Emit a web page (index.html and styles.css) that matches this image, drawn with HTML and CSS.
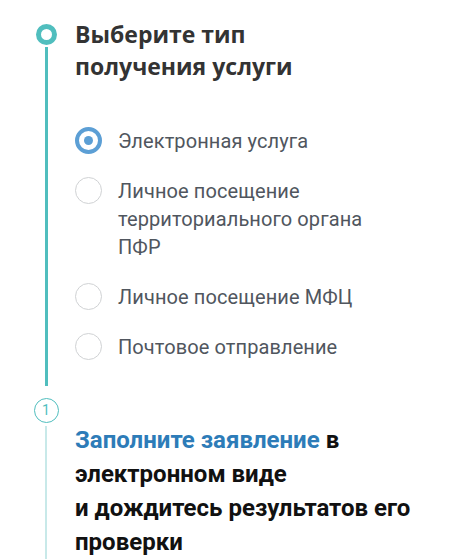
FILE: index.html
```html
<!DOCTYPE html>
<html lang="ru">
<head>
    <meta charset="UTF-8">
    <meta name="viewport" content="width=device-width, initial-scale=1.0">
    <title>Получение услуги</title>
    <link rel="stylesheet" href="styles.css">
</head>
<body>
    <div class="steps">
        <div class="step">
            <div class="rail">
                <div class="dot"></div>
                <div class="line"></div>
            </div>
            <div class="step-body first">
                <h2 class="title">Выберите тип<br>получения услуги</h2>
                <ul class="options">
                    <li class="option checked"><span class="radio"></span><span class="label">Электронная услуга</span></li>
                    <li class="option"><span class="radio"></span><span class="label">Личное посещение территориального органа ПФР</span></li>
                    <li class="option"><span class="radio"></span><span class="label">Личное посещение МФЦ</span></li>
                    <li class="option"><span class="radio"></span><span class="label">Почтовое отправление</span></li>
                </ul>
            </div>
        </div>
        <div class="step">
            <div class="rail">
                <div class="num">1</div>
                <div class="line light"></div>
            </div>
            <div class="step-body second">
                <p class="task"><a href="#" class="link">Заполните заявление</a> в<br>электронном виде<br>и дождитесь результатов его проверки</p>
            </div>
        </div>
    </div>
</body>
</html>
```

FILE: styles.css
```css
body {
    margin: 0;
    background: #ffffff;
    font-family: Roboto, "Noto Sans", sans-serif;
}
.steps {
    padding: 24px 20px 0 33px;
}
.step {
    display: flex;
}
.rail {
    width: 26px;
    flex: none;
    display: flex;
    flex-direction: column;
    align-items: center;
}
.dot {
    width: 21px;
    height: 21px;
    box-sizing: border-box;
    border: 5px solid #50bebe;
    border-radius: 50%;
}
.line {
    flex: 1;
    width: 3px;
    background: #50bebe;
    margin-top: 2px;
}
.line.light {
    width: 2px;
    background: #c8e9e9;
    margin-top: 3px;
}
.num {
    width: 25px;
    height: 25px;
    box-sizing: border-box;
    border: 1.5px solid #50bebe;
    border-radius: 50%;
    color: #50bebe;
    font-size: 14px;
    line-height: 22px;
    text-align: center;
    margin-top: 12px;
}
.step-body {
    margin-left: 16px;
}
.step-body.first {
    padding-bottom: 25px;
}
.title {
    margin: -6px 0 0;
    font-family: "Open Sans", sans-serif;
    font-weight: 700;
    font-size: 23px;
    line-height: 32px;
    color: #333333;
}
.options {
    list-style: none;
    margin: 45px 0 0;
    padding: 0;
}
.option {
    display: flex;
    align-items: flex-start;
    margin-bottom: 22px;
}
.option:last-child {
    margin-bottom: 0;
}
.radio {
    flex: none;
    width: 27px;
    height: 27px;
    box-sizing: border-box;
    border: 1.5px solid #d0d2d4;
    border-radius: 50%;
    margin: 0 16px 0 0;
    display: flex;
    align-items: center;
    justify-content: center;
}
.option.checked .radio {
    border: 4px solid #5c9fd5;
}
.option.checked .radio::after {
    content: "";
    width: 9px;
    height: 9px;
    border-radius: 50%;
    background: #5c9fd5;
}
.label {
    max-width: 270px;
    font-size: 20px;
    line-height: 28px;
    letter-spacing: 0.1px;
    color: #50565e;
}
.step-body.second {
    padding-top: 37px;
}
.task {
    margin: 0;
    font-size: 24px;
    line-height: 34px;
    font-weight: 700;
    color: #111111;
}
.link {
    color: #2d7cb8;
    text-decoration: none;
}
```
